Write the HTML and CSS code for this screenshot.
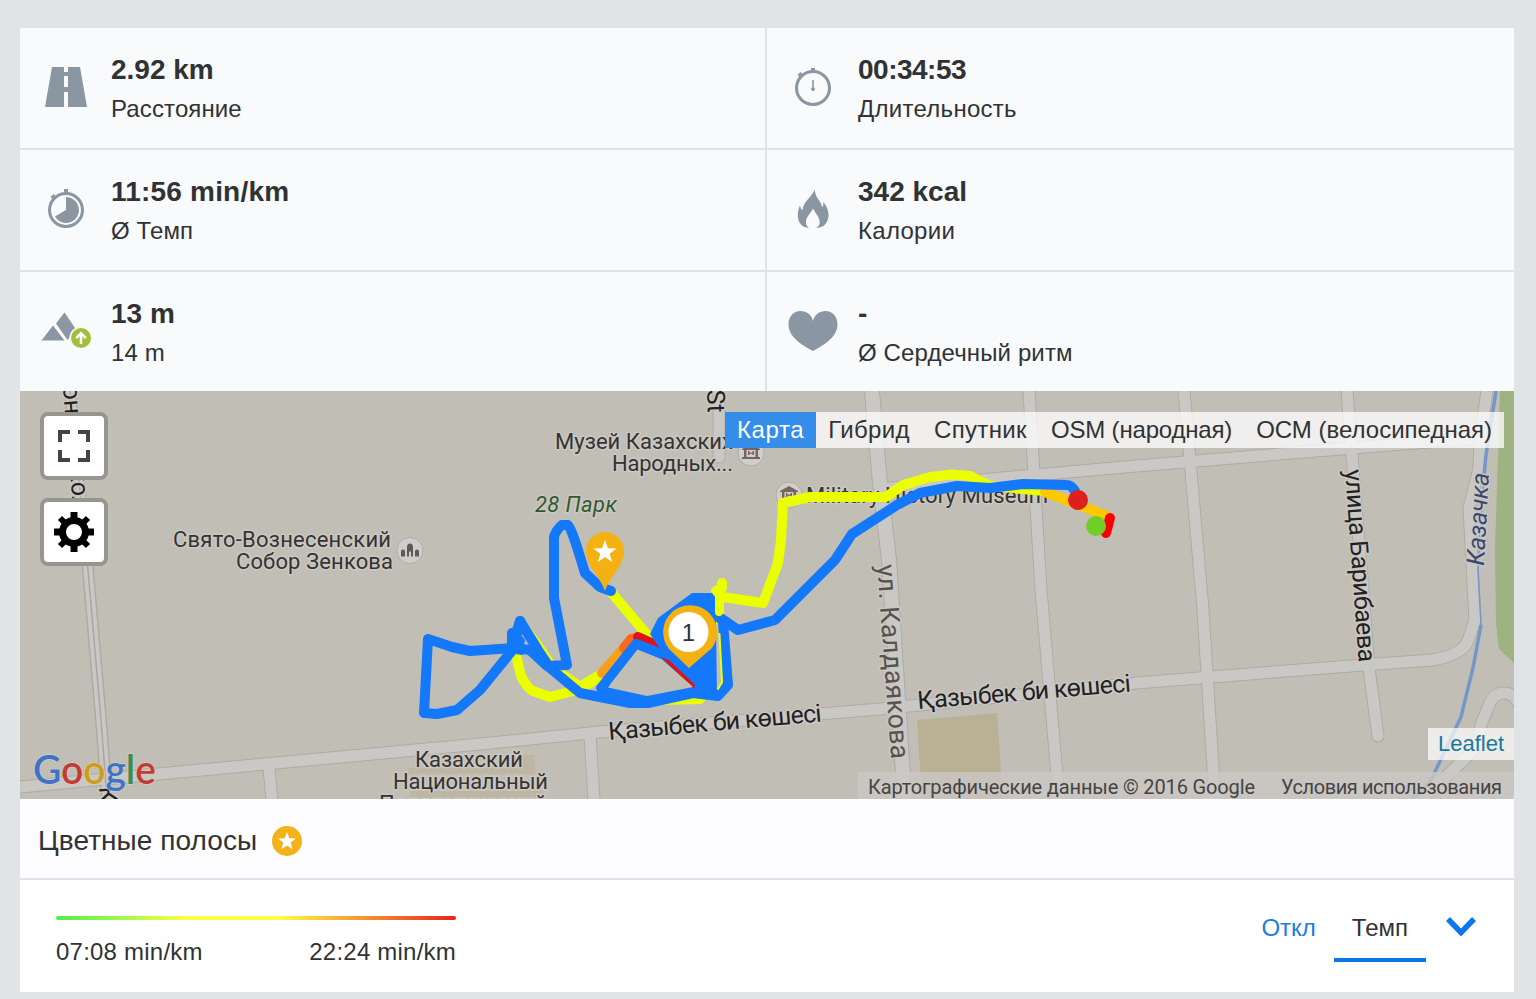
FILE: index.html
```html
<!DOCTYPE html>
<html lang="ru">
  <head>
    <meta charset="UTF-8" />
    <title>Тренировка</title>
    <link rel="stylesheet" href="styles.css">
  </head>
  <body>
    <div class="session">
      <!-- Stats -->
      <div class="stats">
        <div class="stat">
          <svg class="stat-icon" viewBox="0 0 52 52">
            <path d="M12 6h12v5h4V6h12l7 40H28V31h-4v15H5zM24 15v11h4V15z" fill-rule="evenodd" />
          </svg>
          <div>
            <p class="value">2.92 km</p>
            <p class="label">Расстояние</p>
          </div>
        </div>
        <div class="stat">
          <svg class="stat-icon" viewBox="0 0 52 52">
            <circle class="ring" cx="26" cy="27" r="16.500" />
            <path d="M24 7h4v4h-4zM10.500 14l3-3 3 3-3 3zM25.200 19h1.600v7.500a1.800 1.800 0 1 1-1.600 0z" />
          </svg>
          <div>
            <p class="value time">00:34:53</p>
            <p class="label wide">Длительность</p>
          </div>
        </div>
        <div class="stat">
          <svg class="stat-icon" viewBox="0 0 52 52">
            <circle class="ring" cx="26" cy="27" r="16.500" />
            <path d="M24 6h4v5h-4zM10.500 14l3-3 3 3-3 3zM26 14a13 13 0 1 1-11.200 19.500L26 27z" />
          </svg>
          <div>
            <p class="value pace">11:56 min/km</p>
            <p class="label">Ø Темп</p>
          </div>
        </div>
        <div class="stat">
          <svg class="stat-icon" viewBox="0 0 52 52">
            <path d="M27.500 6.500c1 6 2.500 8 5 11.500 1.500 2.500 2.500 4.500 2.500 6.500 1-1.500 1.500-3 1.500-5.500 5.500 7 6.500 15 3 20.500-2 3.500-5 5-10.500 5.500 3.500-2 4-4 3.500-7.500-.700-4.500-4-7-6.500-12-2.500 5-6.500 8-7 12.500-.300 3 .500 5 3 7-5-.500-8-2.500-9.800-6-2.200-5-1.700-11 .8-16.500.500 2 1 3.500 2.500 5 .500-9.500 10-13.500 12-21z" />
          </svg>
          <div>
            <p class="value">342 kcal</p>
            <p class="label wide">Калории</p>
          </div>
        </div>
        <div class="stat">
          <svg class="stat-icon" viewBox="0 1 52 52">
            <path d="M1.500 36.500 13 21.500l11.500 15zM16 19.500l8.500-11 11.500 17-8.500 10.500z" />
            <circle cx="41" cy="34" r="11.500" fill="#f9fafc" />
            <circle cx="41" cy="34" r="10" fill="#a4bf39" />
            <path class="arrow" d="M41 40V29.500m-4.800 4.500 4.800-4.800 4.800 4.800" />
          </svg>
          <div>
            <p class="value">13 m</p>
            <p class="label">14 m</p>
          </div>
        </div>
        <div class="stat">
          <svg class="stat-icon" viewBox="0 1 52 52">
            <path d="M26 47C14 40.500 1.500 32.500 1.500 20.500 1.500 12.500 6.500 7 13.500 7c6 0 11 3.500 12.500 10C27.500 10.500 32.500 7 38.500 7c7 0 12 5.500 12 13.500C50.500 32.500 38 40.500 26 47z" />
          </svg>
          <div>
            <p class="value">-</p>
            <p class="label">Ø Сердечный ритм</p>
          </div>
        </div>
      </div>

      <!-- Map -->
      <div class="map">
        <svg class="map-canvas" viewBox="20 391 1494 408">
          <rect class="land" x="20" y="391" width="1494" height="408" />
          <path class="park" d="M1500 391h14v272l-15-14-3-25-1-74z" />
          <path class="building" d="M917 720l80-7 6 86h-81z" />
          <path class="building faint" d="M523 755h12v18h-12zM408 768h127v6H408zM410 791h133v7H410z" />

          <g class="road-edge">
            <path d="M20 787L158 774 480 744 600 732 880 709 1136 683 1350 666 1432 660Q1462 655 1468 641L1475 620 1469 508 1479 468 1480 440 1487 391" />
            <path d="M880 489L1136 466 1340 449 1480 438" />
            <path d="M872 391L880 483 889 560 902 760 905 799" stroke-width="16" />
            <path d="M1029 391L1041 590 1059 799M1184 391L1203 610 1215 799" />
            <path d="M1347 391L1352 455 1369 668 1378 736" stroke-linecap="round" />
            <path d="M269 768L272 800M590 735L594 800M719 391V457" stroke-linecap="round" />
            <path d="M1530 722L1514 696Q1496 687 1489 705L1481 725 1478 745Q1455 770 1420 799" />
            <path d="M70 391L88 570 101 720 107 799" stroke-width="12" />
          </g>
          <g class="road">
            <path d="M20 787L158 774 480 744 600 732 880 709 1136 683 1350 666 1432 660Q1462 655 1468 641L1475 620 1469 508 1479 468 1480 440 1487 391" />
            <path d="M880 489L1136 466 1340 449 1480 438" />
            <path d="M872 391L880 483 889 560 902 760 905 799" stroke-width="14" />
            <path d="M1029 391L1041 590 1059 799M1184 391L1203 610 1215 799" />
            <path d="M1347 391L1352 455 1369 668 1378 736" stroke-linecap="round" />
            <path d="M269 768L272 800M590 735L594 800M719 391V457" stroke-linecap="round" />
            <path d="M1530 722L1514 696Q1496 687 1489 705L1481 725 1478 745Q1455 770 1420 799" />
            <path d="M70 391L88 570 101 720 107 799" stroke-width="9" />
          </g>
          <path class="rail" d="M70 391L88 570 101 720 107 799" />
          <path class="river" d="M1496 391L1486 455 1484 475" />
          <path class="river thin" d="M1484 475L1478 570 1481 625" />
          <path class="river" d="M1481 625L1473 668 1461 717 1432 778Q1425 790 1411 799" />

          <!-- Places -->
          <g class="poi">
            <circle cx="410" cy="550.500" r="13" />
            <circle cx="751" cy="453" r="13" />
            <circle cx="789" cy="495" r="13" />
          </g>
          <path fill="#5d5a55" d="M407 556.500v-9q0-4 3-4t3 4v9h-2v-5h-2v5zM401 556.500v-5q0-2 2-2t2 2v5zM415 556.500v-5q0-2 2-2t2 2v5z" />
          <path class="museum" d="M742 449l9-5 9 5v1h-18zM744 450h2.500v7h9v-7h2.500v7h2v2h-18v-2h2zM748 451h1.500v1.500h3v-1.500h1.500v4h-1.500v-1.200h-3v1.200h-1.500z" />
          <path class="museum" d="M780 491l9-5 9 5v1h-18zM782 492h2.500v7h9v-7h2.500v7h2v2h-18v-2h2zM786 493h1.500v1.500h3v-1.500h1.500v4h-1.500v-1.200h-3v1.200h-1.500z" />

          <g class="place">
            <text x="555" y="449" textLength="178">Музей Казахских</text>
            <text x="612" y="471" textLength="121">Народных...</text>
            <text x="173" y="547" textLength="218">Свято-Вознесенский</text>
            <text x="236" y="569" textLength="157">Собор Зенкова</text>
            <text x="806" y="503" textLength="242">Military History Museum</text>
            <text x="415" y="767" textLength="108">Казахский</text>
            <text x="393" y="789" textLength="155">Национальный</text>
            <text x="379" y="811" textLength="168">Педагогический</text>
            <text class="park-name" x="535" y="512" textLength="82">28 Парк</text>
          </g>
          <g class="street">
            <text transform="translate(609 740) rotate(-5)" textLength="214">Қазыбек би көшесі</text>
            <text transform="translate(918 709) rotate(-4.700)" textLength="214">Қазыбек би көшесі</text>
            <text class="muted" transform="translate(877 565) rotate(85.800)" textLength="195">ул. Калдаякова</text>
            <text transform="translate(1345 470) rotate(85.900)" textLength="193">улица Барибаева</text>
            <text class="river-name" transform="translate(1484 566) rotate(-87)" textLength="93">Казачка</text>
            <text transform="translate(707 390) rotate(88)">St</text>
            <text transform="translate(63 386) rotate(86)">она</text>
            <text transform="translate(70 469) rotate(86)">кол</text>
            <text transform="translate(99 787) rotate(86)">К</text>
          </g>
          <text class="google" x="33" y="784" textLength="123" lengthAdjust="spacingAndGlyphs"><tspan fill="#3f73c4">G</tspan><tspan fill="#c33c33">o</tspan><tspan fill="#cf9d1a">o</tspan><tspan fill="#3f73c4">g</tspan><tspan fill="#3a8c51">l</tspan><tspan fill="#c33c33">e</tspan></text>

          <rect x="858" y="772" width="656" height="27" fill="#cac8c5" fill-opacity=".8" />
          <g class="terms">
            <text x="868" y="794" textLength="387">Картографические данные © 2016 Google</text>
            <text x="1281" y="794" textLength="221">Условия использования</text>
          </g>

          <!-- Route, coloured by pace -->
          <g class="route">
            <path class="ok" d="M1045 491L990 486 970 476 952 474.500 930 477 903 485 886 497 810 497 783 503 781 540 778 563 763 603 722 597" />
            <path class="ok" d="M722 583V588L716 591M719 590V620" />
            <path class="ok" d="M611 592L649 637 658 646" />
            <path class="ok" d="M521 624L536 643 553 668 582 688 600 677" />
            <path class="ok" d="M515 650L521 676Q527 688 533 691L550 697 573 691 603 673" />
            <path class="ok" d="M660 700L700 699" />
            <path class="slow" d="M602 673L631 640" />
            <path class="slower" d="M624 648L631 639 639 638" />
            <path class="slowest" d="M638 637L656 645" />
            <path class="slow start" d="M1045 492L1107 516" />
            <path class="slowest red" d="M1110 518L1106 533" />
            <path class="track" d="M547 666L567 665 554 598V537Q556 530 562 525L568 525Q571 526 585 573L600 587 611 591" />
            <path class="track" d="M521 650L513 648 470 651 452 647 428 639 424 713 437 714 457 710 480 690 520 641" />
            <path class="track" d="M512 633V646L520 621 538 650 550 668 580 693 630 703 648 703 693 693 718 696 728 685 723 622 719 617 738 630 775 620 835 560 852 534 897 505 920 493 957 486 990 488 1023 484 1067 485Q1071 485 1075 491" />
            <path class="track" d="M520 621L514 648 530 650 545 664" />
            <path class="track" d="M601 688L636 644 664 655 702 688 648 700z" />
            <path class="blob" d="M650 634l8-16 34-25h20l4 5v30l1 69-17-7-42-44z" />
            <path d="M719.500 634L722 682 718 689" stroke="#eaff00" stroke-width="2" />
            <path d="M719 589V612" stroke="#eaff00" stroke-width="8" />
            <path class="descent" d="M661 657l8 3 26 25-1 4z" />
            <path class="hole" d="M637.500 649.500L662 659.500 693 687 647 696 608 687.500z" />
          </g>
          <circle cx="1096" cy="526" r="10" fill="#70cf25" />
          <circle cx="1078" cy="500" r="10" fill="#dd1f20" />

          <path class="pin" d="M605 591C600 576 586 566 586 551a19 19 0 0 1 38 0C624 566 610 576 605 591z" />
          <path fill="#fff" d="M605 540l2.900 8.200 8.700.2-6.900 5.300 2.500 8.300-7.200-4.900-7.200 4.900 2.500-8.300-6.900-5.300 8.700-.2z" />
          <path class="pin" d="M689 668L669 649A27 27 0 1 1 712 648z" />
          <circle cx="688.500" cy="632" r="20" fill="#fff" />
          <text class="pin-number" x="688.500" y="641">1</text>
        </svg>

        <div class="map-buttons">
          <button class="map-button">
            <svg width="32" height="32" viewBox="0 0 32 32">
              <path d="M2 12V2h10M20 2h10v10M30 20v10H20M12 30H2V20" fill="none" stroke="#444" stroke-width="4" />
            </svg>
          </button>
          <button class="map-button">
            <svg width="40" height="40" viewBox="-20 -20 40 40">
              <circle r="11.500" fill="none" stroke="#000" stroke-width="7" />
              <path d="M0-20v7M0 13v7M-20 0h7M13 0h7" stroke="#000" stroke-width="7" />
              <path d="M-14-14l5 5M14 14l-5-5M14-14l-5 5M-14 14l5-5" stroke="#000" stroke-width="6" />
            </svg>
          </button>
        </div>

        <ul class="layers">
          <li class="active">Карта</li>
          <li class="google-layer">Гибрид</li>
          <li class="google-layer">Спутник</li>
          <li class="osm-layer">OSM (народная)</li>
          <li>ОСМ (велосипедная)</li>
        </ul>
        <a class="leaflet">Leaflet</a>
      </div>

      <!-- Colour lines -->
      <div class="lines-header">
        <h2>Цветные полосы</h2>
        <svg width="30" height="30" viewBox="0 0 30 30">
          <circle cx="15" cy="15" r="15" fill="#f2b218" />
          <path fill="#fff" d="M15 6l2.300 6.200 6.700.200-5.300 4.200 1.900 6.600-5.600-3.800-5.600 3.800 1.900-6.600L6 12.400l6.700-.200z" />
        </svg>
      </div>
      <div class="lines-body">
        <div class="legend">
          <div class="legend-bar"></div>
          <div class="legend-labels">
            <span>07:08 min/km</span>
            <span>22:24 min/km</span>
          </div>
        </div>
        <div class="tabs">
          <a class="tab">Откл</a>
          <a class="tab selected">Темп</a>
          <svg class="chevron" width="30" height="20" viewBox="0 0 30 20">
            <path d="M2 2l13 13.500L28 2" fill="none" stroke="#0f75ea" stroke-width="5.500" />
          </svg>
        </div>
      </div>
    </div>
  </body>
</html>
```
FILE: styles.css
```css
body {
  margin: 0;
  padding: 28px 22px 7px 20px;
  background: #e0e4e7;
  color: #303234;
  font-family: "Liberation Sans", Arial, sans-serif;
  font-size: 24px;
}

p,
h2,
ul {
  margin: 0;
  padding: 0;
}

/* stats */
.stats {
  display: grid;
  grid-template-columns: 745px 747px;
  grid-template-rows: 120px 120px 119px;
  gap: 2px;
  background: #e0e3e6;
}

.stat {
  display: flex;
  align-items: flex-start;
  gap: 19px;
  padding-left: 20px;
  background: #f9fafc;
}

.stat-icon {
  width: 52px;
  height: 52px;
  margin-top: 33px;
  fill: #8a96a2;
}

.ring {
  fill: none;
  stroke: #8a96a2;
  stroke-width: 3;
}

.arrow {
  fill: none;
  stroke: #fff;
  stroke-width: 2.5;
}

.value {
  margin-top: 26px;
  font-size: 28px;
  font-weight: bold;
  line-height: 32px;
}

.time {
  letter-spacing: -0.5px;
}

.pace {
  letter-spacing: 0.2px;
}

.label {
  margin-top: 8px;
  line-height: 30px;
  letter-spacing: 0.12px;
}

.wide {
  letter-spacing: 0.28px;
}

/* map */
.map {
  position: relative;
  height: 408px;
  overflow: hidden;
}

.map-canvas {
  display: block;
  width: 1494px;
  height: 408px;
  font-family: Roboto, sans-serif;
}

.land {
  fill: #c1beb6;
}

.park {
  fill: #9fb281;
}

.building {
  fill: #bab094;
}

.faint {
  opacity: 0.6;
}

.road-edge,
.road {
  fill: none;
  stroke: #aeaba4;
  stroke-width: 13px;
}

.road {
  stroke: #cac8c5;
  stroke-width: 11px;
}

.rail {
  fill: none;
  stroke: #aaa7a2;
  stroke-width: 1.5;
}

.river {
  fill: none;
  stroke: #7595cb;
  stroke-width: 3.5;
}

.thin {
  stroke-width: 1.5;
}

.poi circle {
  fill: #d0cecb;
  stroke: #b0ada7;
}

.museum {
  fill: #78645c;
}

.place text,
.street text {
  fill: #35332f;
  stroke: #cbc8c3;
  stroke-width: 3px;
  stroke-linejoin: round;
  paint-order: stroke;
  font-size: 22px;
}

.street text {
  fill: #22211f;
  font-size: 25px;
}

.place .park-name {
  fill: #33592c;
  font-style: italic;
}

.street .muted {
  fill: #56534e;
  font-size: 26.5px;
}

.street .river-name {
  fill: #3c4a70;
  font-style: italic;
}

.google {
  font-family: Lato, sans-serif;
  font-size: 40px;
  font-weight: 600;
  stroke: #d0cdc8;
  stroke-width: 1.5px;
  paint-order: stroke;
}

.terms text {
  fill: #444;
  font-size: 20px;
}

.route {
  fill: none;
  stroke-width: 10px;
  stroke-linejoin: round;
  stroke-linecap: round;
}

.track {
  stroke: #1478fa;
}

.blob {
  fill: #1478fa;
}

.descent {
  fill: #e01414;
}

.hole {
  fill: #c1beb6;
}

.ok {
  stroke: #eaff00;
}

.slow {
  stroke: #f8a01b;
}

.start {
  stroke: #ffc800;
}

.slower {
  stroke: #fa6a1e;
}

.slowest {
  stroke: #e01414;
}

.red {
  stroke: #f80000;
}

.pin {
  fill: #f4b112;
}

.pin-number {
  fill: #303234;
  font-family: "Liberation Sans", Arial, sans-serif;
  font-size: 24px;
  text-anchor: middle;
}

.map-buttons {
  position: absolute;
  top: 21px;
  left: 20px;
  display: flex;
  flex-direction: column;
  gap: 18px;
}

.map-button {
  display: flex;
  align-items: center;
  justify-content: center;
  width: 68px;
  height: 68px;
  padding: 0;
  border: 4px solid #979590;
  border-radius: 8px;
  background: #fff;
}

.layers {
  position: absolute;
  top: 21px;
  right: 10px;
  display: flex;
  list-style: none;
  line-height: 36px;
  white-space: nowrap;
  background: rgba(255, 255, 255, 0.75);
}

.layers li {
  padding: 0 12px;
}

.layers .active {
  background: #338de9;
  color: #fff;
  letter-spacing: 0.6px;
}

.google-layer {
  letter-spacing: 0.36px;
}

.osm-layer {
  letter-spacing: -0.18px;
}

.leaflet {
  position: absolute;
  right: 0;
  bottom: 39px;
  padding: 0 10px;
  background: rgba(255, 255, 255, 0.7);
  color: #1a789f;
  font-size: 22px;
  line-height: 32px;
}

/* colour lines */
.lines-header {
  display: flex;
  align-items: center;
  gap: 15px;
  height: 79px;
  padding: 0 18px;
  border-bottom: 2px solid #e1e3e6;
  background: #fdfdff;
}

.lines-header svg {
  margin-top: 5px;
}

h2 {
  margin-top: 4px;
  font-size: 28px;
  font-weight: normal;
  letter-spacing: 0.08px;
}

.lines-body {
  display: flex;
  justify-content: space-between;
  height: 112px;
  background: #fff;
}

.legend {
  width: 400px;
  padding: 36px 0 0 36px;
}

.legend-bar {
  height: 4px;
  border-radius: 2px;
  background: linear-gradient(to right, #4cf04c, #ffff45 33%, #ffff45 55%, #e8241c);
}

.legend-labels {
  display: flex;
  justify-content: space-between;
  margin-top: 17px;
  line-height: 30px;
  letter-spacing: 0.22px;
}

.tabs {
  display: flex;
  align-items: flex-start;
  margin-right: 38px;
}

.tab {
  height: 48px;
  margin-top: 30px;
  padding: 0 18px;
  color: #1e7be0;
  line-height: 36px;
}

.selected {
  border-bottom: 4px solid #0f75ea;
  color: #303234;
}

.chevron {
  margin: 37px 0 0 20px;
}
```
